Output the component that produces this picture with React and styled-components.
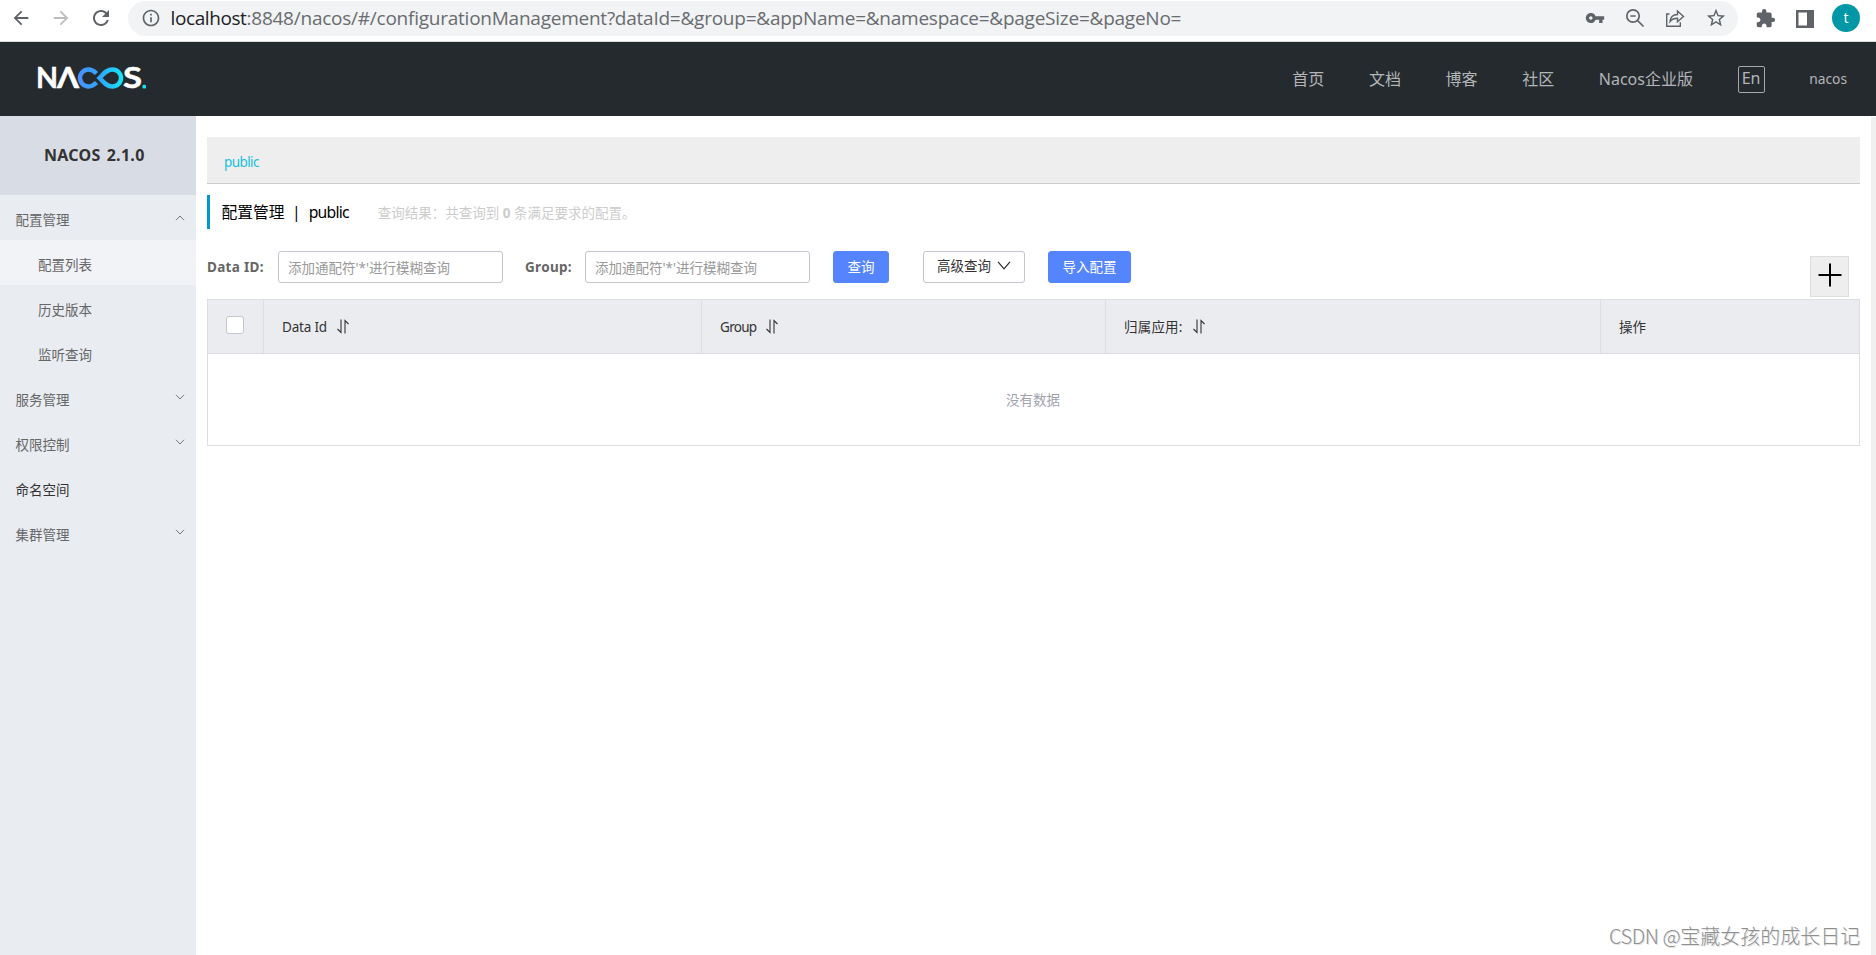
import React from "react";
import styled, { createGlobalStyle } from "styled-components";
import {
  MdArrowBack,
  MdArrowForward,
  MdRefresh,
  MdInfoOutline,
  MdVpnKey,
  MdExtension,
  MdStarOutline,
} from "react-icons/md";

const GlobalStyle = createGlobalStyle`
  * {
    box-sizing: border-box;
  }
  body {
    margin: 0;
    background: #fff;
    color: #333;
    font-family: "Noto Sans", "Noto Sans CJK SC", sans-serif;
    font-size: 13.5px;
  }
`;

const Page = styled.div`
  display: flex;
  flex-direction: column;
  width: 1876px;
  height: 955px;
  overflow: hidden;
  white-space: nowrap;
`;

/* browser bar */

const BrowserBar = styled.div`
  display: flex;
  align-items: flex-start;
  height: 42px;
  padding-top: 1px;
  border-bottom: 1px solid #d9dbdf;
  color: #5f6368;
`;

const BrowserButton = styled.div`
  display: flex;
  align-items: center;
  justify-content: center;
  width: 40px;
  height: 34px;
  padding-left: 1px;
  color: ${(props) => (props.disabled ? "#bbbdc0" : "#5f6368")};
`;

const AddressBar = styled.div`
  display: flex;
  align-items: center;
  width: 1610px;
  height: 35px;
  margin-left: 8px;
  padding: 0 11px 1px 12.5px;
  border-radius: 18px;
  background: #f1f3f4;
`;

const Url = styled.div`
  flex: 1;
  margin-left: 10px;
  font-family: "Open Sans", sans-serif;
  font-size: 19px;
  line-height: 32px;
  letter-spacing: -0.24px;
  color: #696c70;
`;

const Host = styled.span`
  color: #202124;
  letter-spacing: -0.4px;
`;

const AddressIcons = styled.div`
  display: flex;
  align-items: center;
  gap: 20px;
`;

const BrowserActions = styled.div`
  display: flex;
  align-items: center;
  height: 35px;
  margin-left: 17px;
  gap: 20px;
`;

const Avatar = styled.div`
  width: 28px;
  height: 28px;
  margin: -1px 0 0 -2px;
  border-radius: 50%;
  background: #0097a7;
  color: #fff;
  font-size: 14px;
  line-height: 27px;
  text-align: center;
`;

/* site header */

const Header = styled.header`
  display: flex;
  align-items: center;
  justify-content: space-between;
  height: 74px;
  padding: 0 29px 0 34px;
  background: #252a2f;
`;

const Nav = styled.nav`
  display: flex;
  align-items: center;
  gap: 44.6px;
  color: #b3b5b7;
  font-size: 16px;
`;

const NavLink = styled.a`
  color: inherit;
  padding-bottom: 2px;
`;

const Lang = styled.span`
  width: 27px;
  height: 27px;
  border: 1px solid #a6a8aa;
  border-radius: 2px;
  line-height: 23px;
  text-align: center;
`;

const User = styled.span`
  padding-bottom: 1px;
  font-size: 13.8px;
`;

const Body = styled.div`
  display: flex;
  flex: 1;
`;

/* sidebar */

const Sidebar = styled.aside`
  width: 196px;
  background: #e9edf2;
`;

const Version = styled.div`
  height: 79px;
  background: #d8dde5;
  color: #333;
  font-size: 16px;
  font-weight: bold;
  line-height: 78px;
  letter-spacing: 0.3px;
  word-spacing: 1.5px;
  padding-left: 44px;
`;

const MenuItem = styled.div`
  display: flex;
  align-items: center;
  justify-content: space-between;
  height: 45px;
  padding: 2px 11px 0 ${(props) => (props.sub ? 38 : 15.5)}px;
  background: ${(props) => (props.active ? "#f1f3f7" : "transparent")};
  color: ${(props) => (props.dark ? "#333" : "#666")};
`;

const MenuArrow = styled.svg`
  margin-top: ${(props) => (props.$up ? -1 : -3)}px;
`;

/* content */

const Main = styled.main`
  flex: 1;
  padding: 21px 11px 0 11px;
`;

const Scrollbar = styled.div`
  width: 5px;
  margin-top: 1px;
  background: #f0f0f0;
`;

const Namespace = styled.div`
  height: 47px;
  padding-left: 17px;
  border-bottom: 1px solid #ccc;
  background: #eee;
  color: #1ac0df;
  line-height: 50px;
  letter-spacing: -0.6px;
`;

const Title = styled.div`
  display: flex;
  align-items: center;
  height: 34px;
  margin-top: 11px;
  padding: 0 0 1px 11.5px;
  border-left: 3px solid #09c;
  color: #000;
  font-size: 15.75px;
`;

const Divider = styled.span`
  margin: 0 8px 0 7.5px;
`;

const Name = styled.span`
  letter-spacing: -0.8px;
`;

const Summary = styled.span`
  margin-left: 29px;
  color: #ccc;
  font-size: 13.5px;
`;

const Toolbar = styled.div`
  display: flex;
  align-items: center;
  height: 32px;
  margin-top: 22px;
`;

const Label = styled.label`
  width: ${(props) => props.width}px;
  color: #666;
  font-weight: bold;
  letter-spacing: 0.3px;
`;

const Field = styled.input`
  width: 225px;
  height: 32px;
  margin-right: ${(props) => props.gap}px;
  padding: 1px 9px 0;
  border: 1px solid #c4c6cf;
  border-radius: 3px;
  font: inherit;
  &::placeholder {
    color: #999;
  }
`;

const Button = styled.button`
  display: flex;
  align-items: center;
  justify-content: center;
  gap: 6px;
  width: ${(props) => props.width}px;
  height: 32px;
  margin-right: ${(props) => props.gap || 0}px;
  padding: 0 0 ${(props) => (props.primary ? 2 : 4)}px;
  border: 1px solid ${(props) => (props.primary ? "#5584ff" : "#c4c6cf")};
  border-radius: 3px;
  background: ${(props) => (props.primary ? "#5584ff" : "#fff")};
  color: ${(props) => (props.primary ? "#fff" : "#333")};
  font: inherit;
`;

const AddButton = styled.button`
  display: flex;
  align-items: center;
  justify-content: center;
  width: 39px;
  height: 41px;
  margin: 18px 11px 0 auto;
  padding: 0 0 3px;
  border: 1px solid #ddd;
  background: #eee;
`;

const Table = styled.div`
  margin-top: 16px;
  border: 1px solid #dcdee3;
`;

const HeadRow = styled.div`
  display: grid;
  grid-template-columns: 56px 438px 404px 495px 1fr;
  height: 54px;
  border-bottom: 1px solid #dcdee3;
  background: #ebecf0;
`;

const HeadCell = styled.div`
  display: flex;
  align-items: center;
  gap: 10px;
  padding-left: 18px;
  border-right: 1px solid #dcdee3;
  &:last-child {
    border-right: 0;
  }
`;

const HeadText = styled.span`
  margin-top: ${(props) => (props.cjk ? -1 : 0)}px;
  letter-spacing: ${(props) => props.spacing || 0}px;
`;

const Checkbox = styled.span`
  width: 18px;
  height: 18px;
  margin-top: -3px;
  border: 1px solid #c4c6cf;
  border-radius: 3px;
  background: #fff;
`;

const Empty = styled.div`
  height: 91px;
  padding-right: 1px;
  color: #a0a2ad;
  line-height: 92px;
  text-align: center;
`;

const Watermark = styled.div`
  position: absolute;
  left: 1609px;
  top: 920px;
  color: #8f8f8f;
  font-family: "Noto Sans CJK SC", sans-serif;
  font-size: 20px;
  font-weight: 300;
  line-height: 32px;
  text-shadow: 1px 1px 0 #e2e2e2;
`;

const Latin = styled.span`
  letter-spacing: -0.45px;
`;

const LogoSvg = styled.svg`
  margin-top: -3px;
`;

const Logo = () => (
  <LogoSvg width="118" height="44" viewBox="-4 -11 118 44">
    <defs>
      <linearGradient id="loop" gradientUnits="userSpaceOnUse" x1="40" y1="0" x2="85" y2="0">
        <stop offset="0" stopColor="#4a90ff" />
        <stop offset="0.5" stopColor="#2fa8ff" />
        <stop offset="1" stopColor="#16e6f2" />
      </linearGradient>
    </defs>
    <g fill="#fff" stroke="#fff" strokeWidth="0.5" fontFamily="Lato" fontWeight="bold" fontSize="28.500">
      <text x="-2" y="21.200" textLength="22" lengthAdjust="spacingAndGlyphs">N</text>
      <text x="19" y="21.200" textLength="22" lengthAdjust="spacingAndGlyphs">Λ</text>
      <text x="85" y="21.200" textLength="19" lengthAdjust="spacingAndGlyphs">S</text>
    </g>
    <g fill="none" stroke="url(#loop)" strokeWidth="4.500">
      <path d="M58.500 6.500C55 3 53 2.500 50.500 2.500a8.500 8.500 0 0 0 0 17c3.500 0 5.500-1.500 8-4" />
      <path d="M61.500 11c4-4 7-8.500 13-8.500a8.500 8.500 0 0 1 0 17c-6 0-9-4.500-13-8.500z" />
    </g>
    <rect x="104.500" y="17.800" width="3.500" height="3.700" rx="1" fill="#16e6f2" />
  </LogoSvg>
);

const SortIcon = () => (
  <svg width="12" height="15" viewBox="0 0 12 15" fill="none" stroke="#333" strokeWidth="1.1">
    <path d="M4 0.500v13L0.500 10M8 14.500v-13L11.500 5" />
  </svg>
);

const Arrow = ({ up }) => (
  <MenuArrow $up={up} width="10" height="6" viewBox="0 0 10 6" fill="none" stroke="#777">
    <path d={up ? "M1 5.200L5 1l4 4.200" : "M1 0.800L5 5l4-4.200"} />
  </MenuArrow>
);

const menu = [
  { name: "配置管理", arrow: "up" },
  { name: "配置列表", sub: true, active: true },
  { name: "历史版本", sub: true },
  { name: "监听查询", sub: true },
  { name: "服务管理", arrow: "down" },
  { name: "权限控制", arrow: "down" },
  { name: "命名空间", dark: true },
  { name: "集群管理", arrow: "down" },
];

const columns = [
  { name: "Data Id", sort: true, spacing: -0.2 },
  { name: "Group", sort: true, spacing: -0.7 },
  { name: "归属应用:", sort: true, cjk: true, spacing: 0.2 },
  { name: "操作", cjk: true },
];

const App = () => {
  return (
    <Page>
      <GlobalStyle />
      <BrowserBar>
        <BrowserButton>
          <MdArrowBack size={22} />
        </BrowserButton>
        <BrowserButton disabled>
          <MdArrowForward size={22} />
        </BrowserButton>
        <BrowserButton>
          <MdRefresh size={24} />
        </BrowserButton>
        <AddressBar>
          <MdInfoOutline size={20} />
          <Url>
            <Host>localhost</Host>
            :8848/nacos/#/configurationManagement?dataId=&amp;group=&amp;appName=&amp;namespace=&amp;pageSize=&amp;pageNo=
          </Url>
          <AddressIcons>
            <MdVpnKey size={20} />
            <svg width="20" height="20" viewBox="0 0 20 20" fill="none" stroke="currentColor" strokeWidth="1.7">
              <circle cx="8" cy="8" r="6.200" />
              <path d="M12.500 12.500L18.500 18.500M5.300 8h5.400" />
            </svg>
            <svg width="20" height="20" viewBox="0 0 20 20" fill="none" stroke="currentColor" strokeWidth="1.400">
              <path d="M4.500 6H1.700v12.300h13.600v-4" />
              <path d="M5 13.500c.5-4.500 3-7 7.500-7V3l6 5.500-6 5.300v-3.500c-3.500 0-5.500.8-7.500 3.200z" />
            </svg>
            <MdStarOutline size={22} />
          </AddressIcons>
        </AddressBar>
        <BrowserActions>
          <MdExtension size={21} />
          <svg width="18" height="18" viewBox="0 0 18 18">
            <path fill="currentColor" fillRule="evenodd" d="M0 0h18v18H0zM2.500 2.500v13h8.500v-13z" />
          </svg>
          <Avatar>t</Avatar>
        </BrowserActions>
      </BrowserBar>

      <Header>
        <Logo />
        <Nav>
          <NavLink>首页</NavLink>
          <NavLink>文档</NavLink>
          <NavLink>博客</NavLink>
          <NavLink>社区</NavLink>
          <NavLink>Nacos企业版</NavLink>
          <Lang>En</Lang>
          <User>nacos</User>
        </Nav>
      </Header>

      <Body>
        <Sidebar>
          <Version>NACOS 2.1.0</Version>
          {menu.map((item) => (
            <MenuItem key={item.name} sub={item.sub} active={item.active} dark={item.dark}>
              {item.name}
              {item.arrow && <Arrow up={item.arrow === "up"} />}
            </MenuItem>
          ))}
        </Sidebar>

        <Main>
          <Namespace>public</Namespace>
          <Title>
            配置管理<Divider>|</Divider>
            <Name>public</Name>
            <Summary>
              查询结果：共查询到 <b>0</b> 条满足要求的配置。
            </Summary>
          </Title>
          <Toolbar>
            <Label width={71}>Data ID:</Label>
            <Field gap={22} placeholder="添加通配符'*'进行模糊查询" />
            <Label width={60}>Group:</Label>
            <Field gap={23} placeholder="添加通配符'*'进行模糊查询" />
            <Button primary width={56} gap={34}>
              查询
            </Button>
            <Button width={102} gap={23}>
              高级查询
              <svg width="14" height="9" viewBox="0 0 14 9" fill="none" stroke="#333" strokeWidth="1.300">
                <path d="M1 0.800l6 7 6-7" />
              </svg>
            </Button>
            <Button primary width={83}>
              导入配置
            </Button>
            <AddButton>
              <svg width="24" height="24" viewBox="0 0 24 24" stroke="#000" strokeWidth="2">
                <path d="M0.500 12h23M12 0.500v23" />
              </svg>
            </AddButton>
          </Toolbar>
          <Table>
            <HeadRow>
              <HeadCell>
                <Checkbox />
              </HeadCell>
              {columns.map((col) => (
                <HeadCell key={col.name}>
                  <HeadText cjk={col.cjk} spacing={col.spacing}>
                    {col.name}
                  </HeadText>
                  {col.sort && <SortIcon />}
                </HeadCell>
              ))}
            </HeadRow>
            <Empty>没有数据</Empty>
          </Table>
        </Main>
        <Scrollbar />
      </Body>
      <Watermark>
        <Latin>CSDN @</Latin>宝藏女孩的成长日记
      </Watermark>
    </Page>
  );
};

export default App;
